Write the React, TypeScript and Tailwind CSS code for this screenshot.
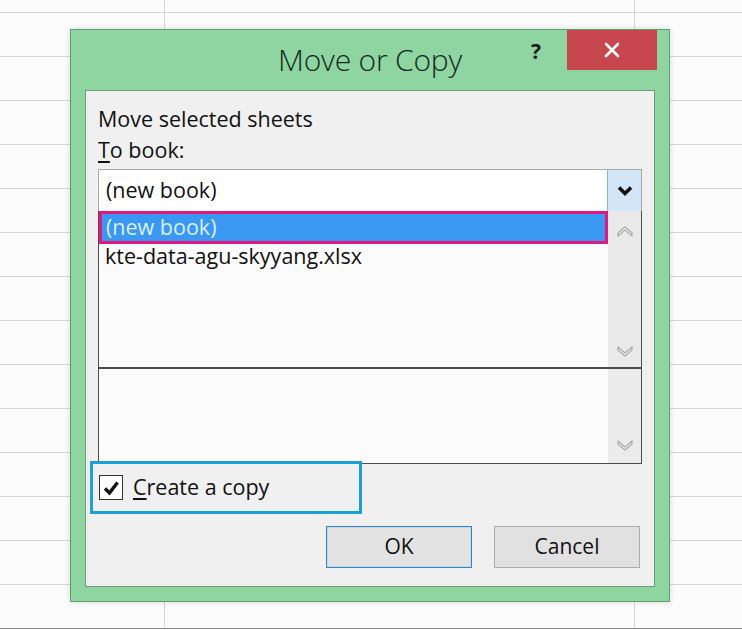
import React from "react";

const font = { fontFamily: '"Open Sans", "Noto Sans", sans-serif' };

const GridRow: React.FC<{ h: string; last?: boolean }> = ({ h, last }) => (
  <div className={`flex ${h} border-b ${last ? "border-[#8a8a8a]" : "border-[#d6d6d6]"}`}>
    <div className="w-[165px] border-r border-[#d6d6d6]" />
    <div className="w-[470px] border-r border-[#d6d6d6]" />
    <div className="flex-1" />
  </div>
);

const ScrollChevron: React.FC<{ up?: boolean }> = ({ up }) => (
  <svg width="16" height="11" viewBox="0 0 16 11" className={up ? "rotate-180" : ""}>
    <polygon
      points="1,1 8,7 15,1 15,4 8,10 1,4"
      fill="#f4f4f4"
      stroke="#a9a9a9"
      strokeWidth="1.2"
      strokeLinejoin="round"
    />
  </svg>
);

export default function App() {
  return (
    <div className="relative w-[742px] h-[630px] overflow-hidden bg-[#fcfcfc]" style={font}>
      {/* spreadsheet behind the dialog */}
      <div className="flex flex-col">
        <GridRow h="h-[13px]" />
        {Array.from({ length: 13 }).map((_, i) => (
          <GridRow key={i} h="h-[44px]" />
        ))}
        <GridRow h="h-[44px]" last />
      </div>

      {/* dialog */}
      <div className="absolute left-[70px] top-[29px] w-[600px] h-[573px] flex flex-col bg-[#8ed5a2] border border-[#5f9f71] shadow-[0_0_6px_rgba(0,0,0,0.15)]">
        {/* title bar */}
        <div className="relative h-[60px] flex items-center justify-center">
          <span className="text-[30px] font-light text-[#14291a] tracking-[-0.2px] -mt-[1px]">Move or Copy</span>
          <span className="absolute left-[460px] top-[6px] text-[21px] font-bold text-[#1b1b1b]">?</span>
          <button className="absolute left-[496px] top-0 w-[90px] h-[40px] bg-[#c8464d] flex items-center justify-center">
            <svg width="16" height="16" viewBox="0 0 16 16">
              <path d="M2 2 L14 14 M14 2 L2 14" stroke="#ffffff" strokeWidth="2.6" strokeLinecap="round" />
            </svg>
          </button>
        </div>

        {/* body */}
        <div className="mx-[14px] h-[497px] bg-[#f0f0f0] border border-[#6e9c7b] flex flex-col px-[12px] pt-[13px] text-[#111] text-[21.5px]">
          <div className="h-[30px] leading-[30px]">Move selected sheets</div>
          <div className="h-[32px] leading-[32px]">
            <span className="underline underline-offset-[3px]">T</span>o book:
          </div>

          {/* combo box */}
          <div className="mt-[3px] h-[42px] flex bg-white border border-[#a9a9a9] border-b-0">
            <div className="flex-1 flex items-center pl-[7px]">(new book)</div>
            <div className="w-[34px] flex items-center justify-center bg-[#d3e6f7] border-l border-[#86b6e4]">
              <svg width="16" height="12" viewBox="0 0 16 12">
                <path d="M2 2.5 L8 8.5 L14 2.5" stroke="#111" strokeWidth="3.6" fill="none" strokeLinejoin="miter" />
              </svg>
            </div>
          </div>

          {/* dropdown list over the sheet list */}
          <div className="flex flex-col border border-t-0 border-[#4d4d4d] bg-[#fbfbfb]">
            <div className="h-[158px] flex border-b-2 border-[#4d4d4d]">
              <div className="flex-1 flex flex-col">
                <div className="h-[33px] border-[3px] border-[#e3187c] bg-[#3b98f2] flex items-center pl-[4px] text-[#d9efff]">
                  (new book)
                </div>
                <div className="h-[24px] flex items-center pl-[6px]">kte-data-agu-skyyang.xlsx</div>
              </div>
              <div className="w-[33px] bg-[#e9e9e9] flex flex-col items-center justify-between pt-[15px] pb-[10px]">
                <ScrollChevron up />
                <ScrollChevron />
              </div>
            </div>
            <div className="h-[94px] flex">
              <div className="flex-1" />
              <div className="w-[33px] bg-[#ebebeb] flex flex-col items-center justify-end pb-[12px]">
                <ScrollChevron />
              </div>
            </div>
          </div>

          {/* create a copy */}
          <div className="-mt-[3px] -ml-[8px] w-[272px] h-[53px] border-[3px] border-[#1d9fd8] flex items-center pl-[6px] gap-[10px]">
            <div className="w-[24px] h-[25px] bg-white border border-[#333] flex items-center justify-center">
              <svg width="18" height="18" viewBox="0 0 18 18">
                <path d="M3 9.5 L7.5 14 L15.5 3.5" stroke="#111" strokeWidth="3.4" fill="none" />
              </svg>
            </div>
            <span>
              <span className="underline underline-offset-[3px]">C</span>reate a copy
            </span>
          </div>

          {/* buttons */}
          <div className="mt-[12px] flex justify-end gap-[22px] pr-[2px]">
            <button className="w-[146px] h-[42px] bg-[#e3e3e3] border border-[#3f80b6] shadow-[inset_0_0_0_1px_#b9dcf7] text-[21px]">
              OK
            </button>
            <button className="w-[146px] h-[42px] bg-[#e1e1e1] border border-[#adadad] text-[21px]">
              Cancel
            </button>
          </div>
        </div>
      </div>
    </div>
  );
}
